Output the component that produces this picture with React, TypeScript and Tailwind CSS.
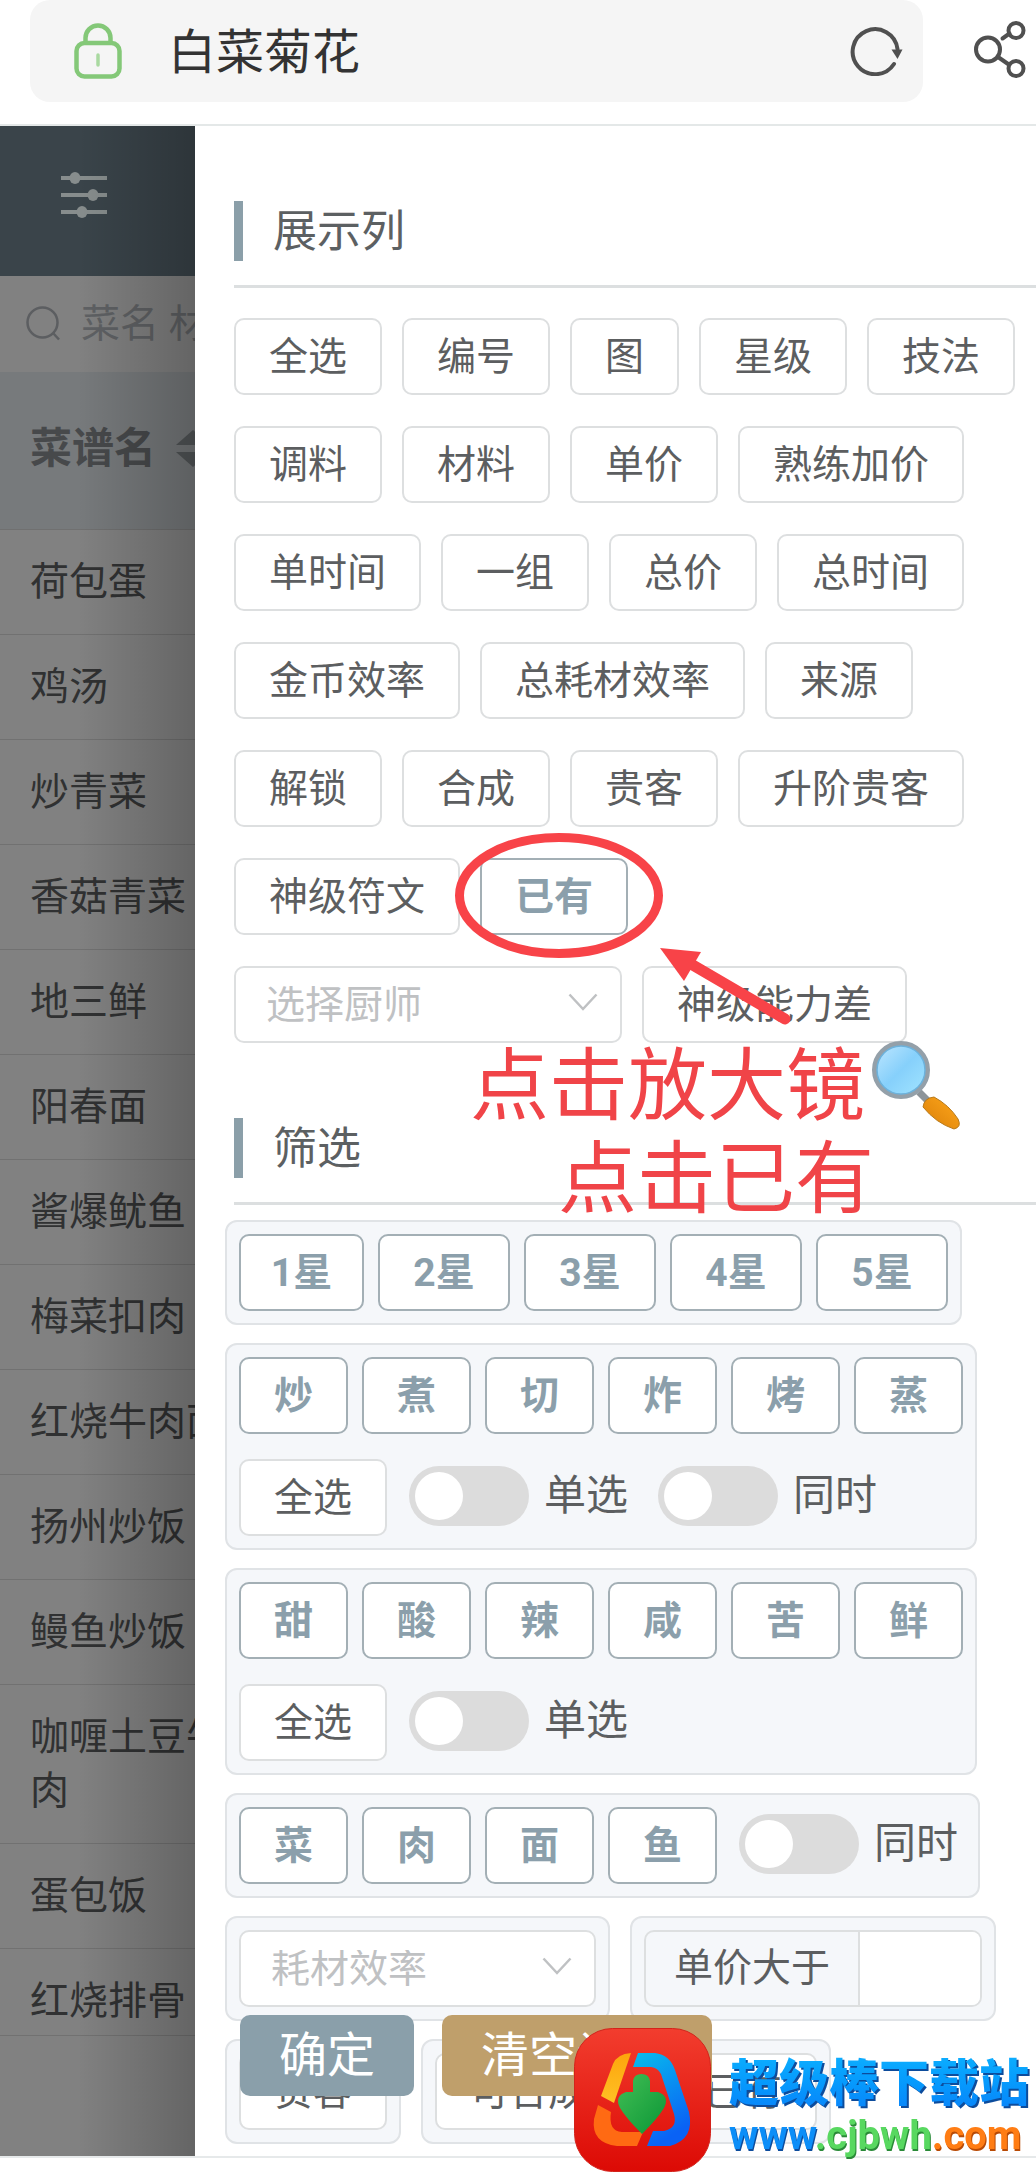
import React from "react";

const columnRows: { label: string; active?: boolean }[][] = [
  [{ label: "全选" }, { label: "编号" }, { label: "图" }, { label: "星级" }, { label: "技法" }],
  [{ label: "调料" }, { label: "材料" }, { label: "单价" }, { label: "熟练加价" }],
  [{ label: "单时间" }, { label: "一组" }, { label: "总价" }, { label: "总时间" }],
  [{ label: "金币效率" }, { label: "总耗材效率" }, { label: "来源" }],
  [{ label: "解锁" }, { label: "合成" }, { label: "贵客" }, { label: "升阶贵客" }],
  [{ label: "神级符文" }, { label: "已有", active: true }],
];

const recipes = [
  "荷包蛋",
  "鸡汤",
  "炒青菜",
  "香菇青菜",
  "地三鲜",
  "阳春面",
  "酱爆鱿鱼",
  "梅菜扣肉",
  "红烧牛肉面",
  "扬州炒饭",
  "鳗鱼炒饭",
  "咖喱土豆牛肉",
  "蛋包饭",
  "红烧排骨",
];

function Chip({
  label,
  active = false,
  width = "px-[33px]",
}: {
  label: string;
  active?: boolean;
  width?: string;
}) {
  return (
    <button
      type="button"
      aria-pressed={active}
      className={
        "h-[77px] shrink-0 whitespace-nowrap rounded-[10px] border-2 bg-white pt-0.5 text-[39px] leading-none " +
        width +
        (active ? " border-[#a3afb5] font-bold text-[#8b9fab]" : " border-[#dddfe0] text-[#5c5e60]")
      }
    >
      {label}
    </button>
  );
}

function SectionTitle({ children }: { children: React.ReactNode }) {
  return (
    <div className="ml-[39px] border-b-[3px] border-[#dcdfe0] pb-6">
      <h2 className="flex h-[60px] items-center border-l-[9px] border-[#8b9fa9] pl-[30px] pt-0.5 text-[44px] leading-none text-[#5c6062]">
        {children}
      </h2>
    </div>
  );
}

function Panel({ children }: { children: React.ReactNode }) {
  return (
    <div className="flex w-fit flex-col gap-[25px] rounded-[12px] border-2 border-[#e0e3e6] bg-[#f5f7fa] p-3">
      {children}
    </div>
  );
}

function Row({ children }: { children: React.ReactNode }) {
  return <div className="flex items-center gap-[14px]">{children}</div>;
}

function Toggle({ label }: { label: string }) {
  return (
    <label className="mx-2 mb-1 flex items-center gap-[15px] text-[42px] leading-none text-[#5c5e60]">
      <input type="checkbox" role="switch" className="peer sr-only" />
      <span className="flex h-[60px] w-[120px] items-center rounded-full bg-[#dcdcdc] px-[6px]">
        <span className="size-12 rounded-full bg-white" />
      </span>
      {label}
    </label>
  );
}

function Select({ label, className }: { label: string; className: string }) {
  return (
    <div className={"relative " + className}>
      <select
        aria-label={label}
        defaultValue=""
        className="h-[77px] w-full appearance-none rounded-[10px] border-2 border-[#dddfe0] bg-white pl-[30px] pt-0.5 text-[39px] leading-none text-[#bfc1c3]"
      >
        <option value="">{label}</option>
      </select>
      <svg
        viewBox="0 0 30 18"
        className="pointer-events-none absolute right-6 top-[27px] h-[18px] w-[30px]"
        fill="none"
        stroke="#bfc1c3"
        strokeWidth="2.5"
      >
        <path d="M1.500 1.500L15 16L28.500 1.500" />
      </svg>
    </div>
  );
}

function BrowserBar() {
  return (
    <header className="flex items-start border-b-2 border-[#e4e8e8] pb-[22px] pl-[30px]">
      <div className="flex h-[102px] flex-1 items-center rounded-[20px] bg-[#f5f5f5] pl-[44px] pr-[20px]">
        <svg viewBox="0 0 48 56" className="h-14 w-12" fill="none" stroke="#84c878" strokeWidth="4.500">
          <path d="M11.500 20V15a12.500 12.500 0 0 1 25 0v5" />
          <rect x="2.500" y="20" width="43" height="33.500" rx="8" />
          <path d="M24 32v10" strokeWidth="3.500" stroke="#a9d9a0" strokeLinecap="round" />
        </svg>
        <span className="ml-[46px] flex-1 pt-1 text-[48px] leading-none text-[#333333]">白菜菊花</span>
        <button type="button" aria-label="刷新">
          <svg viewBox="0 0 54 50" className="h-[50px] w-[54px]" fill="none">
            <path d="M45 38A22.500 22.500 0 1 1 48.500 23" stroke="#505050" strokeWidth="4" strokeLinecap="round" />
            <path d="M42.500 23.500H53.500L48.500 33Z" fill="#505050" />
          </svg>
        </button>
      </div>
      <button type="button" aria-label="分享" className="ml-[50px] mr-[9px] mt-5">
        <svg viewBox="0 0 54 60" className="h-[60px] w-[54px]" fill="none" stroke="#505050" strokeWidth="4">
          <circle cx="15" cy="29.500" r="12" />
          <circle cx="43" cy="10.500" r="7.500" />
          <circle cx="43" cy="48.500" r="7.500" />
          <path d="M29.500 18.500L36.500 13.500" strokeLinecap="round" />
          <path d="M25 37L36.500 45" />
        </svg>
      </button>
    </header>
  );
}

function Sidebar() {
  return (
    <aside className="relative w-[195px] shrink-0 overflow-hidden bg-[#818181]">
      <div className="flex h-[150px] items-start bg-[#3a444a] pl-[61px] pt-[45px]">
        <svg viewBox="0 0 46 48" className="h-12 w-[46px]" stroke="#878d8d" fill="#878d8d" strokeWidth="4">
          <path d="M0 7H46M0 24H46M0 41H46" />
          <g stroke="none">
            <ellipse cx="14" cy="7" rx="5.500" ry="6" />
            <ellipse cx="32" cy="24" rx="5.500" ry="6" />
            <ellipse cx="21" cy="41" rx="5.500" ry="6" />
          </g>
        </svg>
      </div>
      <div className="flex h-24 w-[300px] items-center pl-[26px]">
        <svg viewBox="0 0 36 36" className="size-9 shrink-0" fill="none" stroke="#5c5e61" strokeWidth="2.500">
          <circle cx="16.500" cy="16.500" r="15" />
          <path d="M27 27L33 33.500" />
        </svg>
        <input
          aria-label="搜索"
          placeholder="菜名 材料"
          className="ml-[19px] w-[200px] bg-transparent text-[39px] leading-none placeholder:text-[#5f6164]"
        />
      </div>
      <table className="w-[260px] table-fixed border-collapse text-left text-[39px] leading-[54px]">
        <thead>
          <tr className="h-[157px] border-b border-[#707070] bg-[#777a7c]">
            <th scope="col" className="pb-0.5 pl-[30px] pr-0 text-[42px] text-[#47494b]">
              <span className="flex items-center gap-5">
                菜谱名
                <svg viewBox="0 0 34 38" className="h-[38px] w-[34px] shrink-0" fill="#535759">
                  <path d="M0 15L17 0L34 15Z" />
                  <path d="M0 22L17 37L34 22Z" />
                </svg>
              </span>
            </th>
          </tr>
        </thead>
        <tbody>
          {recipes.map((name) => (
            <tr key={name} className="group border-b border-[#717171]">
              <td className="break-all py-[25px] pl-[30px] pr-0 text-[#303132] group-last:pb-[7px]">{name}</td>
            </tr>
          ))}
        </tbody>
      </table>
      <div className="pointer-events-none absolute inset-0 bg-linear-to-r from-black/0 from-40% to-black/22" />
    </aside>
  );
}

function MagnifierIcon() {
  return (
    <svg viewBox="0 0 90 90" className="mb-1 size-[90px]">
      <defs>
        <linearGradient id="lens" x1="0" y1="0" x2="1" y2="1">
          <stop offset="0" stopColor="#c2e8ff" />
          <stop offset="0.500" stopColor="#86d0fb" />
          <stop offset="1" stopColor="#a4e6ff" />
        </linearGradient>
        <linearGradient id="handle" x1="0" y1="1" x2="1" y2="0">
          <stop offset="0" stopColor="#d97e08" />
          <stop offset="1" stopColor="#ffa81c" />
        </linearGradient>
      </defs>
      <path d="M48 52L60 64" stroke="#8d9499" strokeWidth="7" />
      <path
        d="M52 67Q53 58 63 57Q78 65 87 79Q91 87 83 89Q65 83 52 67Z"
        fill="url(#handle)"
        stroke="#b87918"
        strokeWidth="1"
      />
      <circle cx="30" cy="30" r="26.500" fill="url(#lens)" stroke="#94a0a9" strokeWidth="5" />
      <circle cx="30" cy="30" r="24" fill="none" stroke="#6cb2dc" strokeWidth="1.500" />
    </svg>
  );
}

function Annotation() {
  return (
    <div className="pointer-events-none absolute inset-0 overflow-hidden">
      <svg viewBox="0 0 345 210" className="absolute left-[260px] top-[700px] h-[210px] w-[345px]" fill="none">
        <ellipse cx="104" cy="69.500" rx="99.500" ry="58" stroke="#f84348" strokeWidth="9" />
        <path d="M236 138L330 193" stroke="#f84348" strokeWidth="11" strokeLinecap="round" />
        <path d="M205 122L246 126L229 155Z" fill="#f84348" />
      </svg>
      <div className="absolute left-[275px] top-[914px] whitespace-nowrap text-[79px] leading-[93px] text-[#f04448]">
        <p className="flex items-center gap-[6px]">
          点击放大镜
          <MagnifierIcon />
        </p>
        <p className="pl-[88px]">点击已有</p>
      </div>
    </div>
  );
}

function Drawer() {
  return (
    <main className="relative min-w-0 flex-1 overflow-hidden bg-white pb-3 pt-[75px]">
      <SectionTitle>展示列</SectionTitle>
      <div className="ml-[39px] mt-[30px] flex flex-col gap-[31px]">
        {columnRows.map((row) => (
          <div key={row[0].label} className="flex gap-5">
            {row.map((chip) => (
              <Chip key={chip.label} {...chip} />
            ))}
          </div>
        ))}
        <div className="flex gap-5">
          <Select label="选择厨师" className="w-[388px]" />
          <Chip label="神级能力差" />
        </div>
      </div>

      <div className="mt-[75px]">
        <SectionTitle>筛选</SectionTitle>
      </div>
      <div className="ml-[30px] mt-[15px] flex flex-col gap-[18px]">
        <Panel>
          <Row>
            {["1星", "2星", "3星", "4星", "5星"].map((s, i) => (
              <Chip key={s} label={s} active width={i === 0 ? "w-[125px]" : "w-[132px]"} />
            ))}
          </Row>
        </Panel>
        <Panel>
          <Row>
            {["炒", "煮", "切", "炸", "烤", "蒸"].map((s) => (
              <Chip key={s} label={s} active />
            ))}
          </Row>
          <Row>
            <Chip label="全选" />
            <Toggle label="单选" />
            <Toggle label="同时" />
          </Row>
        </Panel>
        <Panel>
          <Row>
            {["甜", "酸", "辣", "咸", "苦", "鲜"].map((s) => (
              <Chip key={s} label={s} active />
            ))}
          </Row>
          <Row>
            <Chip label="全选" />
            <Toggle label="单选" />
          </Row>
        </Panel>
        <Panel>
          <Row>
            {["菜", "肉", "面", "鱼"].map((s) => (
              <Chip key={s} label={s} active />
            ))}
            <Toggle label="同时" />
          </Row>
        </Panel>
        <div className="flex gap-5">
          <Panel>
            <Select label="耗材效率" className="w-[357px]" />
          </Panel>
          <Panel>
            <label className="flex h-[77px] overflow-hidden rounded-[10px] border-2 border-[#dddfe0] text-[39px] leading-none text-[#5c5e60]">
              <span className="flex items-center border-r-2 border-[#dddfe0] px-7">单价大于</span>
              <input type="text" className="w-[120px] bg-white px-4" />
            </label>
          </Panel>
        </div>
        <div className="flex gap-5">
          <Panel>
            <Chip label="贵客" />
          </Panel>
          <Panel>
            <Chip label="可合成且菜谱已有" />
          </Panel>
        </div>
      </div>

      <div className="absolute bottom-[60px] left-[45px] flex gap-7 text-[48px] leading-none text-white">
        <button type="button" className="h-[81px] rounded-[10px] bg-[#8a9faa] px-[39px]">
          确定
        </button>
        <button type="button" className="h-[81px] rounded-[10px] bg-[#bf9f6b] px-[39px]">
          清空设置
        </button>
      </div>
      <Annotation />
    </main>
  );
}

function SiteBadge() {
  return (
    <div className="absolute bottom-[5px] right-1 flex items-center gap-[18px]">
      <svg viewBox="0 0 137 144" className="h-36 w-[137px]">
        <defs>
          <linearGradient id="badge" x1="0" y1="0" x2="0" y2="1">
            <stop offset="0" stopColor="#f23d2e" />
            <stop offset="1" stopColor="#dc0a05" />
          </linearGradient>
          <linearGradient id="yellow" x1="0" y1="0" x2="0" y2="1">
            <stop offset="0" stopColor="#fda50c" />
            <stop offset="1" stopColor="#ffc125" />
          </linearGradient>
          <linearGradient id="blue" x1="0" y1="0" x2="0.400" y2="1">
            <stop offset="0" stopColor="#08bdec" />
            <stop offset="1" stopColor="#0a62f5" />
          </linearGradient>
          <linearGradient id="green" x1="0" y1="0" x2="1" y2="1">
            <stop offset="0" stopColor="#42be55" />
            <stop offset="1" stopColor="#0b9636" />
          </linearGradient>
        </defs>
        <rect x="0.500" y="0.500" width="136" height="143" rx="38" fill="url(#badge)" stroke="#d3231b" />
        <path d="M57 25L40 75L27 68L39 36Q43 26 57 25Z" fill="url(#yellow)" />
        <path d="M24 77L37 84Q34 103 48 104H69L63 118H43Q17 115 20 91Z" fill="#ff6a13" />
        <path
          d="M64 25H81Q96 27 101 42L115 84Q121 111 96 118H73L79 103H90Q104 100 100 86L87 46Q84 40 77 39H59Z"
          fill="url(#blue)"
        />
        <path
          d="M59 53Q60 46 67.500 46Q75 46 76 53V64H84Q96 68 90 80Q84 90 68 106Q52 90 46 80Q40 68 52 64H59Z"
          fill="url(#green)"
        />
      </svg>
      <div className="w-[303px] whitespace-nowrap pt-2 font-black">
        <p className="bg-linear-to-b from-[#10b4ff] to-[#0a84fa] bg-clip-text font-['Noto_Sans_CJK_SC',sans-serif] text-[50px] leading-[64px] text-transparent drop-shadow-[2px_2px_0_#0d4c9c]">
          超级棒下载站
        </p>
        <p className="font-['Roboto',sans-serif] text-[40px] font-bold leading-[50px]">
          <span className="text-[#0c8ef8] drop-shadow-[1px_2px_0_#0d4c9c]">www</span>
          <span className="text-[#58d860] drop-shadow-[1px_2px_0_#2a8a38]">.cjbwh</span>
          <span className="text-[#ff7d14] drop-shadow-[1px_2px_0_#b84a05]">.com</span>
        </p>
      </div>
    </div>
  );
}

export default function App() {
  return (
    <div
      className="relative overflow-hidden bg-white pb-[19px] font-['Roboto','Noto_Sans_CJK_SC',sans-serif]"
      lang="zh-CN"
    >
      <BrowserBar />
      <div className="flex border-b-2 border-[#e6e9ea]">
        <Sidebar />
        <Drawer />
      </div>
      <SiteBadge />
    </div>
  );
}
